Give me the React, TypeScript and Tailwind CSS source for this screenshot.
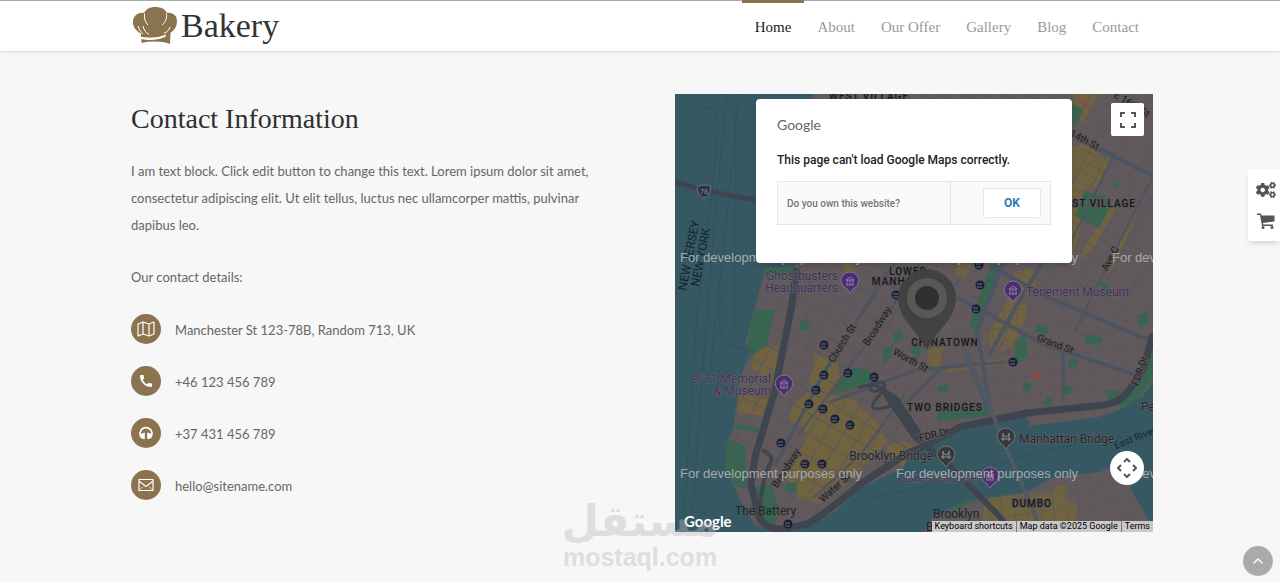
import { ChevronUp } from "lucide-react";
import { FaCogs } from "react-icons/fa";
import { MdCall } from "react-icons/md";

const navItems = ["Home", "About", "Our Offer", "Gallery", "Blog", "Contact"];

const ChefHat = () => (
  <svg className="h-10 w-[46px]" viewBox="0 0 46 40" fill="#8c7350" aria-hidden="true">
    <path d="M9 27.500C4 25 0 20 1 14.500C2 9 7 6 12 7C14 3 18 1 23 1C29 1 33 3 35 7C41 6 45 10 45 15C45 21 42 24 38.500 27L38 38C29 35 19 35 9.500 37V33C17 35 26 34 33 31C25 32 17 32 9 31Z" />
    <path d="M12.500 7.500C12 12 13 16 16 19M34.500 7.500C35 12 34 16 30 19M6 20C7 24 9 26 11 28M11 20C12 24 14 27 17 28.500M38 21C37 24 35 26 32 27.500" stroke="#fff" strokeWidth="1" fill="none" />
    <path d="M9 32C18 33.500 28 32 34 29.500" stroke="#fff" strokeWidth="1.400" fill="none" />
  </svg>
);

const MapIcon = () => (
  <svg className="h-[18px] w-[18px]" viewBox="0 0 18 18" fill="none" stroke="currentColor" strokeWidth="1.2" strokeLinejoin="round" aria-hidden="true">
    <path d="M1 4L6 2L12 4L17 2V14L12 16L6 14L1 16ZM6 2V14M12 4V16" />
  </svg>
);

const HeadphonesIcon = () => (
  <svg className="h-4 w-4" viewBox="0 0 16 16" fill="currentColor" aria-hidden="true">
    <path d="M2.500 11A6 6 0 1 1 13.500 11" fill="none" stroke="currentColor" strokeWidth="1.700" />
    <path d="M6.800 7.500V14H6C3.500 14 1.800 12.500 1.800 10.500Q4 7.500 6.800 7.500ZM9.200 7.500V14H10C12.500 14 14.200 12.500 14.200 10.500Q12 7.500 9.200 7.500Z" />
  </svg>
);

const MailIcon = () => (
  <svg className="h-4 w-4" viewBox="0 0 16 16" fill="none" stroke="currentColor" strokeWidth="1.200" aria-hidden="true">
    <path d="M1 2.500H15V13.500H1ZM1.500 4.500L8 9.500L14.500 4.500" />
    <path d="M2 12.500L5 9.500M14 12.500L11 9.500" strokeWidth="0.700" />
  </svg>
);

const CartIcon = () => (
  <svg className="h-[18px] w-[18px]" viewBox="0 0 18 18" fill="currentColor" aria-hidden="true">
    <path d="M0 1.500H4L4.500 3.500H17.500V9.500L6 11L6.300 12.500H16V14H5L3 3H0Z" />
    <circle cx="6" cy="15.500" r="1.500" />
    <circle cx="15" cy="15.500" r="1.500" />
  </svg>
);

const contacts = [
  { icon: <MapIcon />, text: "Manchester St 123-78B, Random 713, UK" },
  { icon: <MdCall className="h-4 w-4" />, text: "+46 123 456 789" },
  { icon: <HeadphonesIcon />, text: "+37 431 456 789" },
  { icon: <MailIcon />, text: "hello@sitename.com" },
];

const subwayStops = [
  [149, 251], [149, 281], [173, 279], [199, 283], [141, 296], [134, 310], [148, 315],
  [160, 325], [175, 331], [106, 349], [130, 370], [147, 370], [113, 430], [221, 201],
  [239, 222], [305, 191], [301, 215], [338, 268], [304, 171],
];

const parks = [
  "M82 174L120 170L117 180L88 182ZM78 216H100L92 250L70 268Z",
  "M158 300L166 285L178 274L194 276L199 286L180 294Z",
  "M52 345L70 352L72 395L60 392L50 372Z",
  "M72 395L96 390L102 410L100 438L88 430Z",
  "M410 97L428 102L436 110L424 134L400 122Z",
  "M340 248L350 240L353 262L340 272Z",
  "M316 170H325L302 236L294 232Z",
  "M208 255L218 250L216 264L208 272ZM218 238L226 234L227 246L219 248ZM238 248L246 254L244 264L236 258Z",
  "M125 227L133 225L134 236L126 237ZM60 330L84 334V338L60 335Z",
  "M430 296L450 298L466 274L478 255V284L458 312L436 312Z",
  "M264 316L308 308L316 320L300 324L262 326Z",
  "M395 8L408 16L402 30L396 30Z",
  "M410 240L428 244L425 252L410 248ZM394 264L404 266L401 274L393 272ZM360 230L375 235L372 240L360 238Z",
  "M348 288L357 290L354 298L348 296ZM372 302L378 306L374 312L368 309ZM389 290L397 293L396 300L388 299Z",
  "M262 291H273V298H262ZM424 188L432 190L438 204L430 202Z",
  "M285 408L300 392L345 386L352 398L295 408L270 424Z",
  "M110 390L121 388L122 398L110 399ZM140 420L150 418L166 436H152Z",
  "M440 88L445 90L442 94L437 92ZM462 222L472 218L474 230L464 232Z",
];

const blocks = [
  "M80 254L104 252L98 290L76 274ZM64 300L94 305L88 322L62 318Z",
  "M140 260L162 265L165 285L155 300L134 290Z",
  "M118 312L132 298L176 304L204 330L212 348L176 385L146 410L124 406L110 380L128 350L130 334L114 326Z",
  "M396 54L410 48L430 66L414 96L386 96ZM396 96L414 98L412 110L398 160L388 160Z",
  "M430 66L436 62L424 92L416 96ZM440 104L446 108L416 158L402 166Z",
  "M340 178L358 174L362 190L340 214L328 246L316 264L314 238L332 208Z",
  "M172 161L182 176L174 183L168 172Z",
  "M280 161H300L290 186L280 180L284 170L270 166Z",
  "M252 256L270 252L264 272L254 274ZM272 274L330 264V270L270 278ZM400 0H424L408 28L396 24Z",
  "M443 152L462 120L440 170L432 184Z",
  "M212 350L232 348L244 356L228 374L212 364Z",
  "M310 404L378 398L380 392L392 390V407L402 410L400 428H370L366 436H306Z",
  "M340 214L352 208L350 226L338 252L326 258Z",
];

const NYMap = () => (
  <svg className="absolute inset-0 h-full w-full" viewBox="0 0 478 438" preserveAspectRatio="xMidYMid slice" role="img" aria-label="Map of Lower Manhattan">
    <defs>
      <clipPath id="land">
        <path d="M137 0H478V288L468 302L450 313L435 320L423 323L355 332L352 322L285 336L245 357L233 363L228 374L187 393L160 418L136 430L110 438H96L80 431L68 412L50 372L52 350L58 336L65 285L76 255L70 250L80 214L90 174L120 172Z" />
        <path d="M248 438L258 423L292 406L352 398L376 384L424 378L450 368L458 400L478 432V438Z" />
      </clipPath>
      <pattern id="downtown" width="15" height="19" patternUnits="userSpaceOnUse" patternTransform="rotate(30)">
        <path d="M0 0H15M0 0V19" stroke="#4e5560" strokeWidth="1.400" />
      </pattern>
      <pattern id="village" width="26" height="10" patternUnits="userSpaceOnUse" patternTransform="rotate(29)">
        <path d="M0 0H26M0 0V10" stroke="#50545e" strokeWidth="1.200" />
      </pattern>
      <pattern id="lower-east" width="13" height="17" patternUnits="userSpaceOnUse" patternTransform="rotate(-7)">
        <path d="M0 0H13M0 0V17" stroke="#53555d" strokeWidth="1" />
      </pattern>
    </defs>
    <rect width="478" height="438" fill="#365863" />
    <g fill="none" stroke="#2c4a54" strokeDasharray="2 2">
      <path d="M25 14C50 8 42 35 38 90L22 220L8 438M52 0L42 100L28 270L16 438M64 0L52 120L34 290" />
      <path d="M60 20V240M48 200C38 240 50 250 70 256M0 232Q40 248 62 254M190 405C280 390 350 350 478 340M230 408H300" />
    </g>
    <g clipPath="url(#land)">
      <rect width="478" height="438" fill="#61595b" />
      {blocks.map((d) => (
        <path key={d} d={d} fill="#716240" />
      ))}
      {parks.map((d) => (
        <path key={d} d={d} fill="#366550" />
      ))}
      <path d="M0 160H260L252 256L200 296L240 350V438H0Z" fill="url(#downtown)" />
      <path d="M250 0H478V240L316 200L260 190Z" fill="url(#village)" />
      <path d="M252 256L260 190L316 200L478 240V330L240 350L200 296ZM248 372H478V438H248Z" fill="url(#lower-east)" />
      <g fill="none" stroke="#4c5461" strokeWidth="4">
        <path d="M398 42L478 82M316 172L370 202L478 248M264 195L306 216L368 250L458 280" />
        <path d="M330 164L302 238L316 318M288 253L314 316M370 164L340 214L314 262" />
        <path d="M155 308L198 292L240 276L330 268M388 252V308M265 276L230 310M220 168L148 280L100 372" strokeWidth="3" />
        <path d="M440 58L394 152M478 82L432 172L400 238M124 340L210 225L244 170M138 404L186 360L230 300" strokeWidth="2" />
      </g>
    </g>
    <g fill="none" stroke="#3f454e" strokeLinejoin="round">
      <path d="M0 88L28 96L80 106" strokeWidth="5" />
      <path d="M122 174L116 216L100 296L80 363L76 390L83 420Q88 436 108 435L132 430Q150 420 187 389L233 359L250 352L285 333L352 319L428 311Q448 308 457 292L468 276L478 240" strokeWidth="7" />
      <path d="M87 356Q101 362 94 372Q86 390 84 422" strokeWidth="4" />
      <path d="M183 294Q196 288 206 294Q200 300 196 296Q192 288 204 288T202 304T216 312" strokeWidth="3" />
      <path d="M206 292L216 308L240 343L272 369L325 423L336 438M206 296L220 304L244 340" strokeWidth="6" />
      <path d="M288 253L315 313L332 356L358 416L366 438" strokeWidth="4" stroke="#505965" />
    </g>
    <path d="M356 280L362 276L367 281L362 285ZM406 5L412 8L409 12L405 9Z" fill="#8f4848" />
    <g>
      {subwayStops.map(([x, y]) => (
        <g key={`${x}-${y}`}>
          <circle cx={x} cy={y} r="4.500" fill="#191f34" />
          <path d={`M${x - 3} ${y - 1}H${x + 2}M${x - 3} ${y + 2}H${x + 2}`} stroke="#6d7180" strokeWidth="1" />
        </g>
      ))}
    </g>
    <path d="M22 93Q29 89 36 93Q35 102 29 104Q23 102 22 93Z" fill="#2a3150" stroke="#6b7280" />
    <text x="29" y="100" fontSize="7" textAnchor="middle" fill="#8c8f98">78</text>

    {/* Street names */}
    <g fontSize="10" fill="#1c1e22" stroke="#5c5558" strokeWidth="2" paintOrder="stroke" textAnchor="middle">
      <text transform="translate(408 49) rotate(28)">14th St</text>
      <text transform="translate(438 166) rotate(-62)">Ave C</text>
      <text transform="translate(170 251) rotate(-58)">Church St</text>
      <text transform="translate(205 234) rotate(-58)">Broadway</text>
      <text transform="translate(234 269) rotate(29)">Worth St</text>
      <text transform="translate(114 376) rotate(-58)">Broadway</text>
      <text transform="translate(162 396) rotate(-42)">Water St</text>
      <text transform="translate(379 253) rotate(21)">Grand St</text>
      <text transform="translate(260 344) rotate(-14)">FDR Dr</text>
      <text transform="translate(468 278) rotate(-72)">FDR Dr</text>
      <text transform="translate(461 347) rotate(-22)" fill="#172a32" stroke="none">East River</text>
      <text transform="translate(455 13) rotate(32)">E 16th St</text>
    </g>
    {/* Districts */}
    <g fontSize="10" fontWeight="500" letterSpacing="1" fill="#15171b" stroke="#5c5558" strokeWidth="2" paintOrder="stroke" textAnchor="middle">
      <text x="194" y="6">WEST VILLAGE</text>
      <text x="422" y="113">EAST VILLAGE</text>
      <text x="233" y="181">LOWER</text>
      <text x="232" y="191">MANHATTAN</text>
      <text x="270" y="252">CHINATOWN</text>
      <text x="270" y="317">TWO BRIDGES</text>
      <text x="357" y="413">DUMBO</text>
    </g>
    <g fontSize="12" fill="#15242b">
      <text transform="translate(11 197) rotate(-79)">NEW JERSEY</text>
      <text transform="translate(24 193) rotate(-79)">NEW YORK</text>
    </g>
    {/* Places */}
    <g fontSize="12" fill="#3d3154" stroke="#6f6873" strokeWidth="1" paintOrder="stroke">
      <text x="163" y="186" textAnchor="end">Ghostbusters</text>
      <text x="163" y="198" textAnchor="end">Headquarters</text>
      <text x="351" y="202">Tenement Museum</text>
      <text x="96" y="289" textAnchor="end">9/11 Memorial</text>
      <text x="96" y="301" textAnchor="end">&amp; Museum</text>
      <text x="304" y="388" fontSize="11" textAnchor="end">Jane&apos;s Carousel</text>
    </g>
    <g fontSize="12" fill="#222428" stroke="#6a686c" strokeWidth="1" paintOrder="stroke">
      <text x="258" y="366" textAnchor="end">Brooklyn Bridge</text>
      <text x="344" y="349">Manhattan Bridge</text>
      <text x="60" y="421" stroke="none">The Battery</text>
      <text x="258" y="424" stroke="none">Brooklyn</text>
      <text x="251" y="437" stroke="none">Bridge Park</text>
      <text x="466" y="317">Pe</text>
    </g>
    {[[175, 187], [338, 196], [109, 290], [315, 382]].map(([x, y]) => (
      <g key={`${x}-${y}`} transform={`translate(${x} ${y})`}>
        <path d="M-9 0A9 9 0 1 1 9 0Q8 6 3 8L0 12L-3 8Q-8 6 -9 0Z" fill="#4a2f70" stroke="#837590" />
        <path d="M-4 4H4M-3 4V-1M0 4V-1M3 4V-1M-4 -1H4L0 -4Z" stroke="#8d7ca1" fill="none" />
      </g>
    ))}
    {[[331, 343], [271, 361]].map(([x, y]) => (
      <g key={`${x}-${y}`} transform={`translate(${x} ${y})`}>
        <path d="M-9 0A9 9 0 1 1 9 0Q8 6 3 8L0 12L-3 8Q-8 6 -9 0Z" fill="#36383b" stroke="#777" />
        <path d="M-3 4V-4M3 4V-4M-5 2H5M-3 -3Q0 3 3 -3" stroke="#929292" fill="none" />
      </g>
    ))}

    {/* Location pin */}
    <path d="M252 256C246 240 223 226 223 204A29 29 0 0 1 281 204C281 226 258 240 252 256Z" fill="#414141" fillOpacity="0.95" />
    <circle cx="252" cy="204" r="20" fill="#5b5759" />
    <circle cx="252" cy="204" r="12" fill="#303031" />

    <g fontFamily="Liberation Sans, sans-serif" fontSize="13" fill="#a5abad">
      {[168, 384].map((y) =>
        [5, 221, 437].map((x) => (
          <text key={`${x}-${y}`} x={x} y={y}>For development purposes only</text>
        ))
      )}
    </g>
  </svg>
);

const ErrorDialog = () => (
  <div role="dialog" aria-label="Google Maps error" className="absolute left-[81px] top-[5px] h-[164px] w-[316px] rounded-[4px] bg-white px-[21px] pt-[17px] shadow-md">
    <p className="font-['Lato',sans-serif] text-[14px] leading-[18px] text-[#666]">Google</p>
    <p className="mt-[17px] text-[12px] leading-[18px] font-medium whitespace-nowrap text-[#222]">This page can't load Google Maps correctly.</p>
    <div className="mt-3 flex h-11 border border-[#e5e5e5] bg-[#fafafa]">
      <p className="flex w-[173px] items-center border-r border-[#e5e5e5] pl-[9px] text-[10px] font-medium text-[#757575]">Do you own this website?</p>
      <div className="flex flex-1 items-center justify-end pr-[9px]">
        <button className="h-[30px] w-[58px] rounded-[2px] border border-[#e5e5e5] bg-white text-[12px] font-bold text-[#3079b5]">OK</button>
      </div>
    </div>
  </div>
);

const App = () => {
  return (
    <div className="relative min-h-screen overflow-hidden bg-[#f7f7f7] font-['Lato',sans-serif] text-[#666]">
      {/* Header */}
      <header className="border-t border-[#aaa] bg-white shadow-sm">
        <div className="flex h-[50px] justify-between pl-[132px] pr-[128px]">
          <a href="#home" className="flex items-center gap-[3px] text-[#333]">
            <ChefHat />
            <span className="font-['Liberation_Serif',serif] text-[34px] leading-[50px]">Bakery</span>
          </a>
          <nav className="flex font-['Liberation_Serif',serif] text-[15px] leading-[52px]">
            {navItems.map((item) => (
              <a
                key={item}
                href={`#${item}`}
                className={item === "Home" ? "relative px-[13px] text-[#222]" : "px-[13px] text-[#999]"}
              >
                {item === "Home" && <span className="absolute inset-x-0 -top-px h-[3px] bg-[#8c7350]" />}
                {item}
              </a>
            ))}
          </nav>
        </div>
      </header>

      {/* Contact */}
      <main className="grid grid-cols-2 gap-[66px] pt-[43px] pl-[131px] pr-[127px]">
        <section className="pt-[7px]">
          <h1 className="font-['Liberation_Serif',serif] text-[28px] leading-9 text-[#2f2f2f]">Contact Information</h1>
          <p className="mt-[21px] text-[13px] leading-[27px]">
            I am text block. Click edit button to change this text. Lorem ipsum dolor sit amet, consectetur adipiscing elit. Ut elit tellus, luctus nec ullamcorper mattis, pulvinar dapibus leo.
          </p>
          <p className="mt-[25px] text-[13px] leading-[27px]">Our contact details:</p>
          <ul className="mt-[23px] flex flex-col gap-[22px]">
            {contacts.map((c) => (
              <li key={c.text} className="flex items-center gap-[14px] text-[13px]">
                <span className="flex h-[30px] w-[30px] items-center justify-center rounded-full bg-[#8c7350] text-white">{c.icon}</span>
                <span className="pt-1">{c.text}</span>
              </li>
            ))}
          </ul>
        </section>

        <section className="relative h-[438px] overflow-hidden font-['Roboto',sans-serif]">
          <NYMap />
          <ErrorDialog />
          <button aria-label="Toggle fullscreen view" className="absolute right-[9px] top-[9px] flex h-[33px] w-[33px] items-center justify-center rounded-[2px] bg-white text-[#555]">
            <svg className="h-4 w-4" viewBox="0 0 16 16" fill="none" stroke="currentColor" strokeWidth="2">
              <path d="M1 5V1H5M11 1H15V5M15 11V15H11M5 15H1V11" />
            </svg>
          </button>
          <button aria-label="Map camera controls" className="absolute right-[9px] bottom-[47px] flex h-[34px] w-[34px] items-center justify-center rounded-full bg-white text-[#555]">
            <svg className="h-5 w-5" viewBox="0 0 20 20" fill="none" stroke="currentColor" strokeWidth="2">
              <path d="M7 4L10 1L13 4M7 16L10 19L13 16M4 7L1 10L4 13M16 7L19 10L16 13" />
            </svg>
          </button>
          <span className="absolute bottom-0.5 left-[9px] font-['Lato',sans-serif] text-[15px] leading-[18px] font-bold text-white">Google</span>
          <div className="absolute right-0 bottom-0 flex h-[11px] divide-x divide-[#777] bg-[#c9c9c9] text-[9px] leading-[11px] text-black">
            <button className="px-[3px]">Keyboard shortcuts</button>
            <span className="px-[3px]">Map data ©2025 Google</span>
            <a href="#terms" className="px-[3px]">Terms</a>
          </div>
        </section>
      </main>

      {/* Watermark */}
      <div className="pointer-events-none absolute top-[497px] left-1/2 flex w-[154px] -translate-x-1/2 flex-col items-center text-[#bbb] opacity-40">
        <span lang="ar" dir="rtl" className="font-['DejaVu_Sans',sans-serif] text-[43px] leading-[48px] font-bold">مستقل</span>
        <span className="font-['Liberation_Sans',sans-serif] text-[25px] leading-6 font-bold">mostaql.com</span>
      </div>

      {/* Side tools */}
      <aside className="absolute top-[169px] right-0 flex h-[72px] w-8 flex-col items-center justify-center gap-3 rounded-l-[3px] bg-white pl-1 text-[#555] shadow-md">
        <button aria-label="Settings"><FaCogs className="h-5 w-5" /></button>
        <button aria-label="Cart"><CartIcon /></button>
      </aside>
      <button aria-label="Back to top" className="absolute right-[7px] bottom-1.5 flex h-[30px] w-[30px] items-center justify-center rounded-full bg-[#aaa] text-white">
        <ChevronUp className="h-4 w-4" />
      </button>
    </div>
  );
};

export default App;
